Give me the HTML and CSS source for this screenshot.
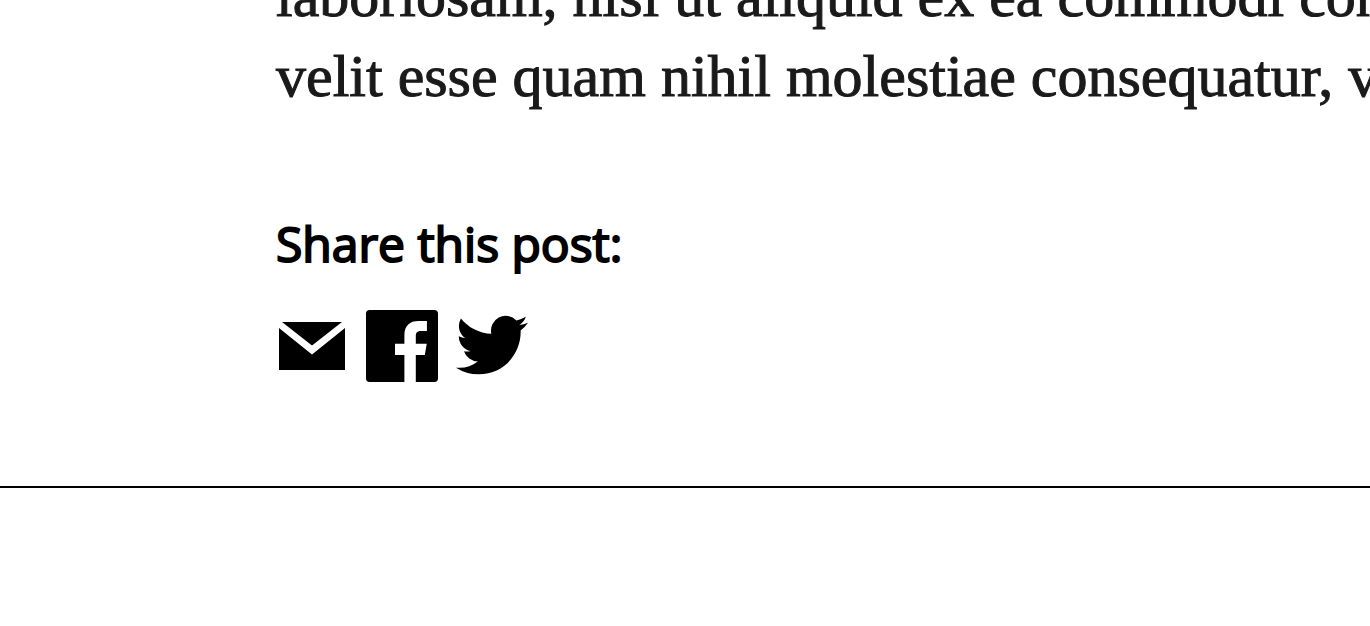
FILE: index.html
```
<!DOCTYPE html>
<html lang="en">
<head>
<meta charset="utf-8">
<title>Post</title>
<link rel="stylesheet" href="styles.css">
</head>
<body>
<article class="post">
<p class="post-text">laboriosam, nisi ut aliquid ex ea commodi con<br>velit esse quam nihil molestiae consequatur, v</p>
<section class="share">
<h2 class="share-title">Share this post:</h2>
<nav class="share-links" aria-label="Share">
<a class="share-link" href="#email" aria-label="Email"><svg class="icon" viewBox="0 0 72 72"><path d="M6 12H66L36 35.500ZM3 18L36 44.500L69 18V60H3Z"/></svg></a>
<a class="share-link" href="#facebook" aria-label="Facebook"><svg class="icon" viewBox="0 0 24 24"><path d="M22.900 0H1.100C.5 0 0 .5 0 1.100v21.800C0 23.500.5 24 1.100 24h11.700v-9H9.670v-3.750h3.130V8.300c0-3.100 1.890-4.640 4.660-4.640h2.850V7h-1.960c-1.500 0-1.750.8-1.750 1.800v2.450h3.650L19.600 15h-3v9h6.300c.6 0 1.100-.5 1.100-1.100V1.100C24 .5 23.500 0 22.900 0Z"/></svg></a>
<a class="share-link" href="#twitter" aria-label="Twitter"><svg class="icon" viewBox="0 0.333 24 24"><path d="M23.954 4.569a10 10 0 0 1-2.825.775 4.958 4.958 0 0 0 2.163-2.723 9.990 9.990 0 0 1-3.127 1.184 4.920 4.920 0 0 0-8.384 4.482C7.691 8.094 4.066 6.130 1.640 3.161a4.822 4.822 0 0 0-.666 2.475c0 1.710.87 3.213 2.188 4.096a4.904 4.904 0 0 1-2.228-.616v.061a4.923 4.923 0 0 0 3.946 4.827 4.996 4.996 0 0 1-2.212.085 4.937 4.937 0 0 0 4.604 3.417 9.868 9.868 0 0 1-6.102 2.105c-.39 0-.779-.023-1.170-.067a13.995 13.995 0 0 0 7.557 2.209c9.054 0 13.999-7.496 13.999-13.986 0-.209 0-.42-.015-.63a9.936 9.936 0 0 0 2.460-2.548l-.047-.02Z"/></svg></a>
</nav>
</section>
</article>
<hr class="divider">
</body>
</html>
```
FILE: styles.css
```
* {
  box-sizing: border-box;
}

body {
  margin: 0;
  background: #fff;
  color: #000;
  overflow: hidden;
}

.post {
  padding: 0 0 104px 276px;
}

.post-text {
  margin: -44px 0 0;
  font: 500 60px/80px "Gentium Book Basic", "Liberation Serif", serif;
  color: #1a1a1a;
  -webkit-text-stroke: 1px #1a1a1a;
  white-space: nowrap;
}

.share {
  padding-top: 96px;
}

.share-title {
  margin: 0;
  font: 400 48px/64px "Open Sans", "Noto Sans", sans-serif;
  -webkit-text-stroke: 2px #000;
}

.share-links {
  display: flex;
  gap: 18px;
  margin-top: 34px;
}

.share-link {
  display: block;
  color: inherit;
}

.icon {
  display: block;
  width: 72px;
  height: 72px;
  fill: currentColor;
}

.divider {
  margin: 0;
  border: 0;
  border-top: 2px solid #000;
}
```
